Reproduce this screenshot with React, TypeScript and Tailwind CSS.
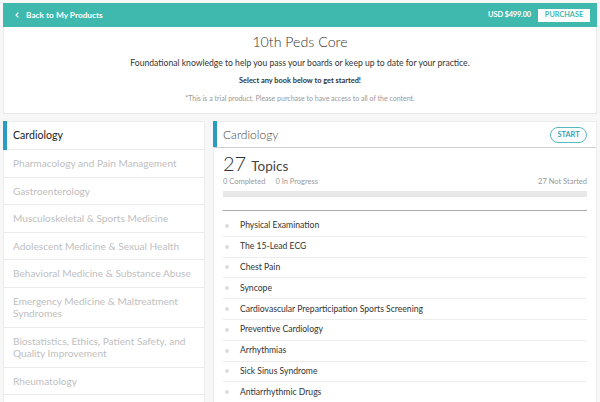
import { LuChevronLeft } from 'react-icons/lu';

const books: { name: string; active?: boolean }[] = [
  { name: 'Cardiology', active: true },
  { name: 'Pharmacology and Pain Management' },
  { name: 'Gastroenterology' },
  { name: 'Musculoskeletal & Sports Medicine' },
  { name: 'Adolescent Medicine & Sexual Health' },
  { name: 'Behavioral Medicine & Substance Abuse' },
  { name: 'Emergency Medicine & Maltreatment Syndromes' },
  { name: 'Biostatistics, Ethics, Patient Safety, and Quality Improvement' },
  { name: 'Rheumatology' },
];

const topics = [
  'Physical Examination',
  'The 15-Lead ECG',
  'Chest Pain',
  'Syncope',
  'Cardiovascular Preparticipation Sports Screening',
  'Preventive Cardiology',
  'Arrhythmias',
  'Sick Sinus Syndrome',
  'Antiarrhythmic Drugs',
];

export default function App() {
  return (
    <div className="w-[600px] h-[402px] overflow-hidden bg-[#f7f7f7] px-[3px] pt-[3px] font-['Lato','Open_Sans',sans-serif] text-[#333]">
      <header className="h-[24px] flex items-center justify-between bg-[#3fb8ae] pl-[10px] pr-[7px]">
        <div className="flex items-center gap-[5px] text-white font-bold text-[8.3px]">
          <LuChevronLeft size={8} strokeWidth={3.5} />
          <span>Back to My Products</span>
        </div>
        <div className="flex items-center gap-[7px]">
          <span className="text-white font-bold text-[7.5px] tracking-[-0.2px]">USD $499.00</span>
          <button className="h-[13px] w-[52px] bg-white text-[#3fb8ae] font-bold text-[7.3px] leading-none">PURCHASE</button>
        </div>
      </header>

      <section className="h-[87px] bg-white border border-t-0 border-[#e8e8e8] flex flex-col items-center">
        <h1 className="mt-[6px] text-[14.2px] font-light leading-[18px] text-[#333]">10th Peds Core</h1>
        <p className="mt-[6px] text-[8.6px] leading-[12px]">Foundational knowledge to help you pass your boards or keep up to date for your practice.</p>
        <p className="mt-[6px] text-[7.4px] font-bold leading-[11px]">Select any book below to get started!</p>
        <p className="mt-[7px] text-[7px] leading-[10px] text-[#999]">*This is a trial product. Please purchase to have access to all of the content.</p>
      </section>

      <div className="mt-[7px] flex gap-[8px] items-start">
        <aside className="w-[202px] h-[290px] shrink-0 bg-white border border-[#ececec]">
          {books.map((b) => (
            <div
              key={b.name}
              className={
                b.active
                  ? 'relative border-b border-[#ececec] pl-[9px] pr-[6px] py-[7px] leading-[13px] text-[10.6px] text-[#222]'
                  : 'border-b border-[#ececec] pl-[9px] pr-[8px] py-[7px] leading-[12.5px] text-[10.1px] text-[#c0c0c0]'
              }
            >
              {b.active && <span className="absolute left-[-1px] top-[-1px] bottom-[-1px] w-[4px] bg-[#2a9cc0]" />}
              {b.name}
            </div>
          ))}
        </aside>

        <main className="flex-1 h-[290px] bg-white border border-[#ececec]">
          <div className="relative h-[26px] flex items-center justify-between pl-[9px] pr-[9px] border-b border-[#cfcfcf]">
            <span className="absolute left-[-1px] top-[-1px] bottom-0 w-[4px] bg-[#2a9cc0]" />
            <span className="text-[12px] font-light text-[#444]">Cardiology</span>
            <button className="h-[16px] w-[37px] rounded-full border border-[#55b9c4] text-[#3a9fb4] text-[7.4px] font-bold leading-none">START</button>
          </div>

          <div className="px-[9px]">
            <div className="flex items-baseline gap-[5px] mt-[4px] leading-[22px]">
              <span className="text-[20px] font-light text-[#333]">27</span>
              <span className="text-[13.5px] text-[#444]">Topics</span>
            </div>
            <div className="flex justify-between text-[7.5px] text-[#999] leading-[10px]">
              <div className="flex gap-[10px]">
                <span>0 Completed</span>
                <span>0 In Progress</span>
              </div>
              <span>27 Not Started</span>
            </div>
            <div className="h-[6px] bg-[#e8e8e8] mt-[4px]" />
            <div className="border-b border-[#aaa] mt-[13px]" />
            <ul className="pt-[5px]">
              {topics.map((t) => (
                <li key={t} className="h-[20.8px] flex items-center border-b border-[#ededed] text-[8.6px] text-[#333]">
                  <span className="w-[4px] h-[4px] rounded-full bg-[#ddd] ml-[2px] mr-[11px]" />
                  {t}
                </li>
              ))}
            </ul>
          </div>
        </main>
      </div>
    </div>
  );
}
